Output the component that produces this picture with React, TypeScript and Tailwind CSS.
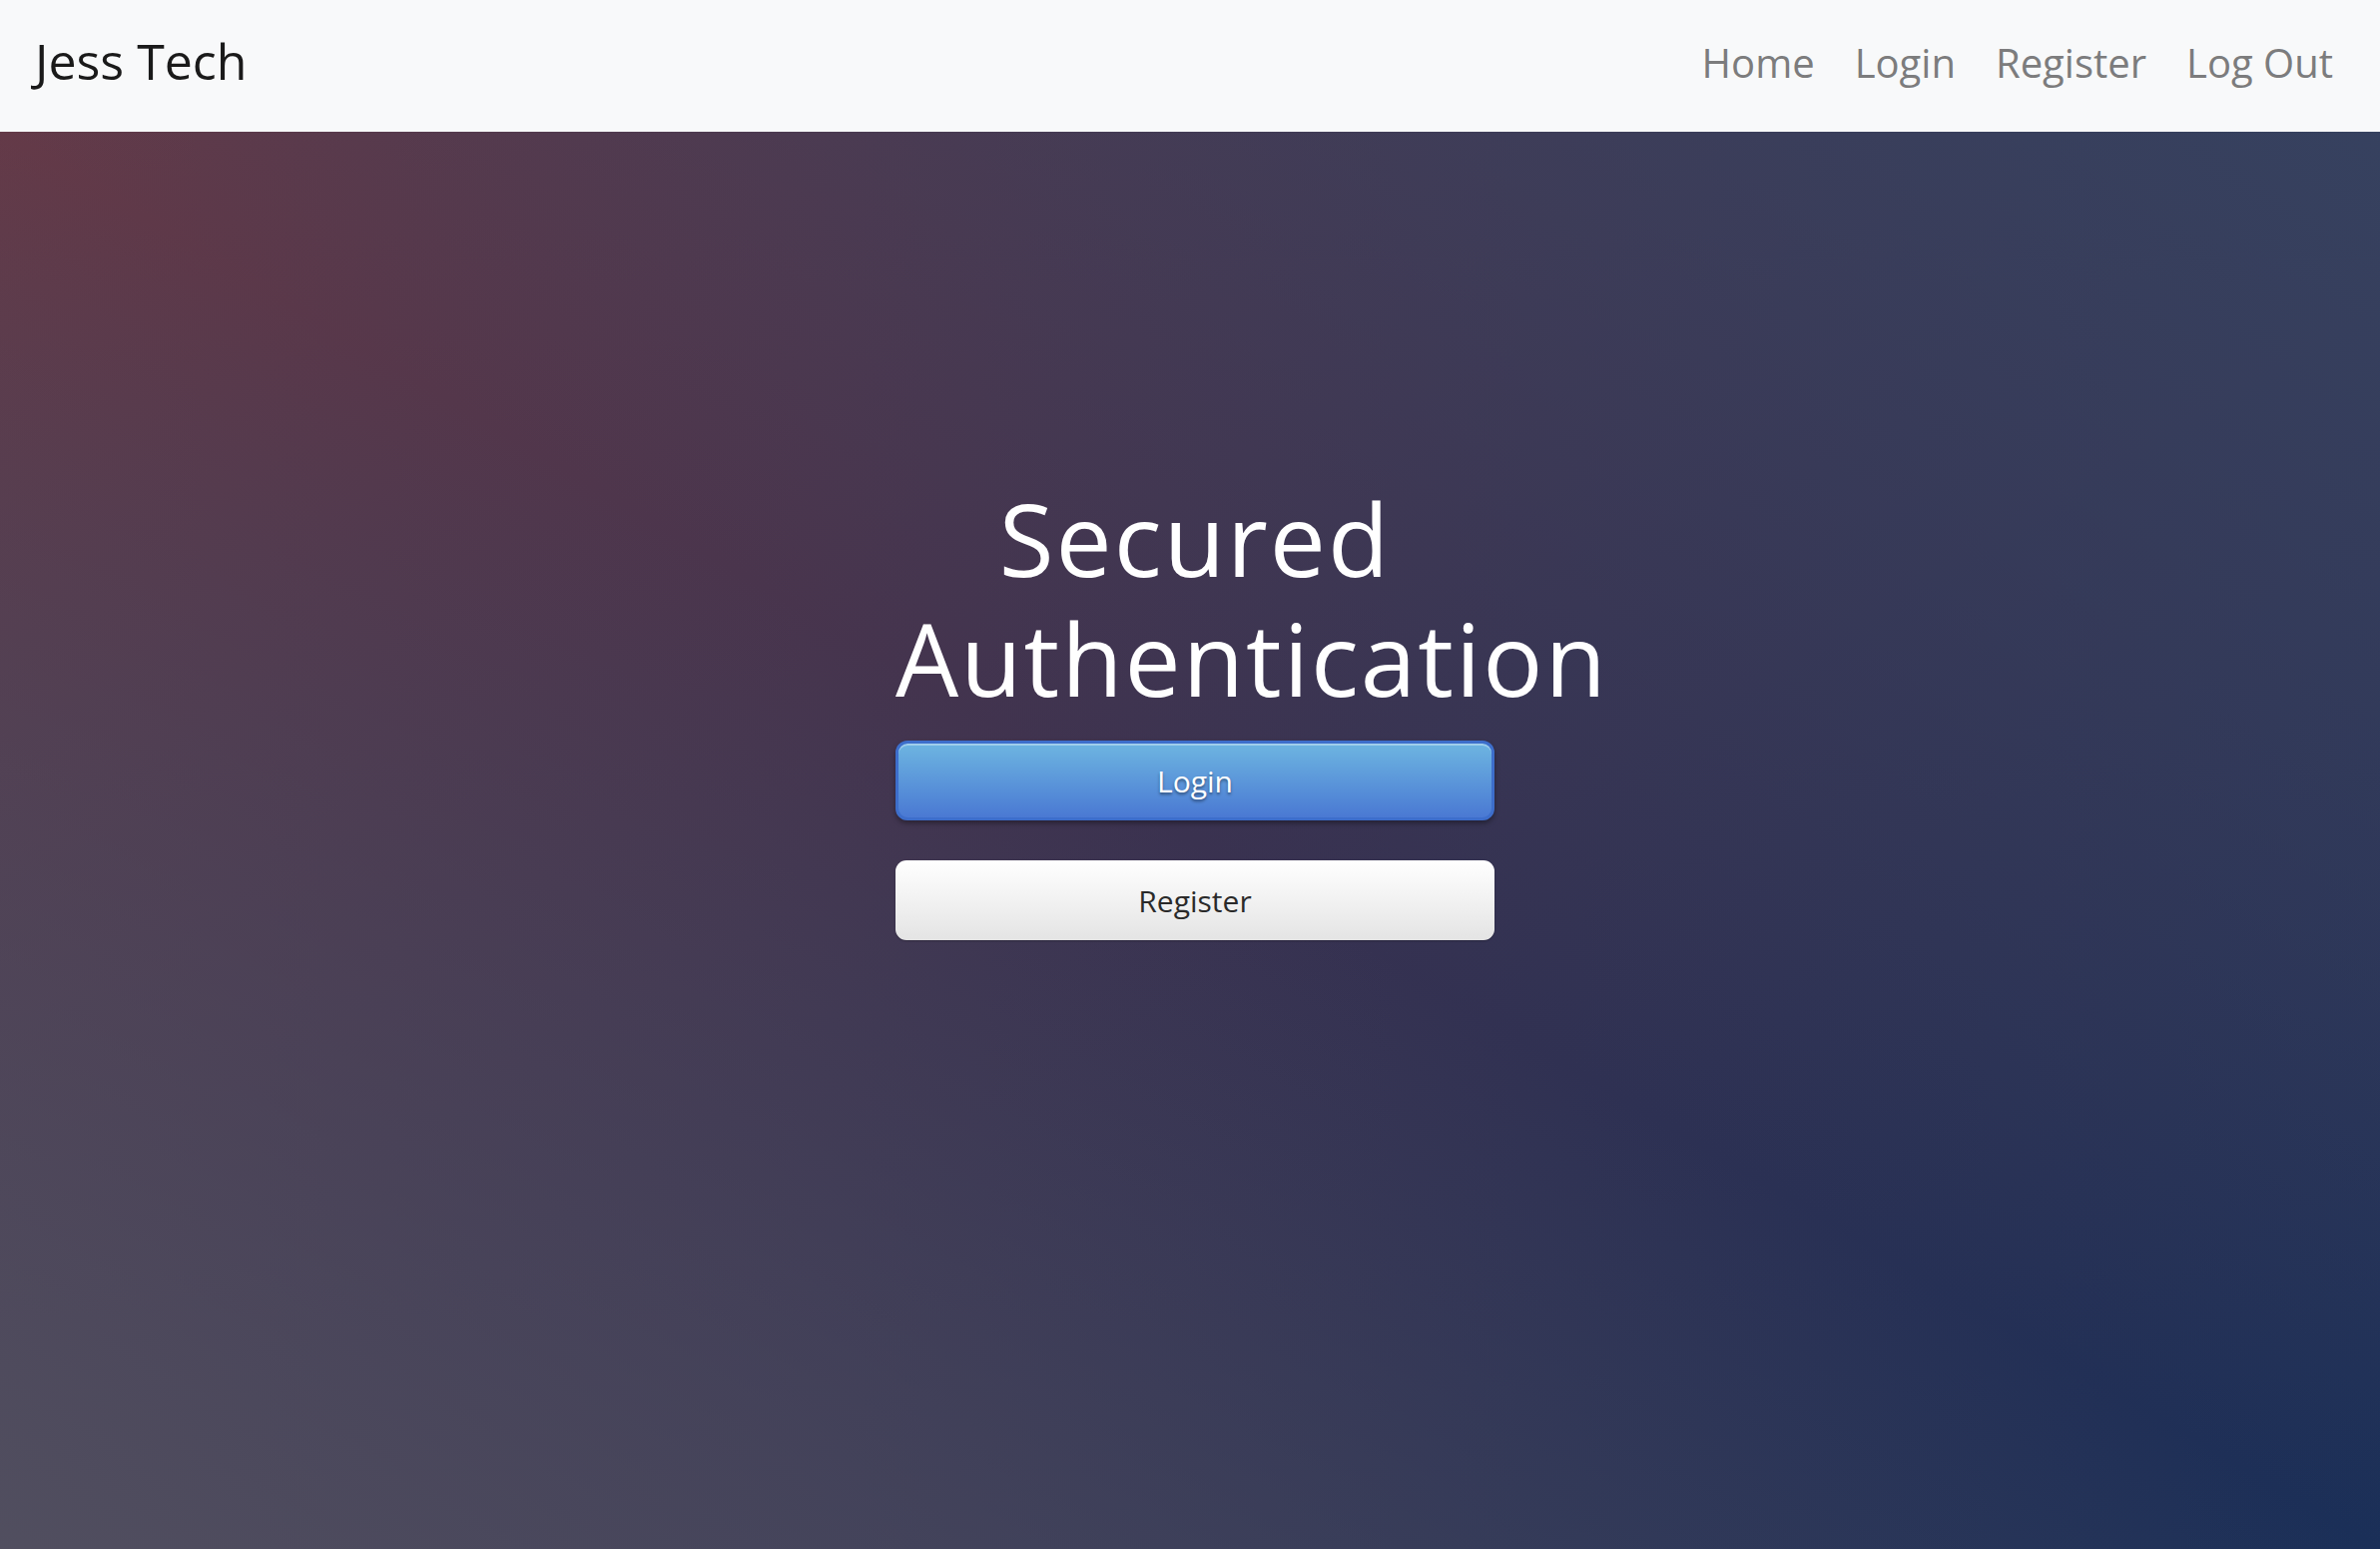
import React from "react";

export default function App() {
  return (
    <div className="min-h-screen w-full flex flex-col font-['Open_Sans',sans-serif]">
      <nav className="h-[132px] shrink-0 bg-[#f8f9fa] flex items-center justify-between pl-[35px] pr-[47px]">
        <a className="text-[50px] leading-[1.5] text-[#1a1a1a] pb-[9px]">Jess Tech</a>
        <div className="flex items-center gap-[40px] text-[40px] leading-[1.5] text-[#7c7c7d] pb-[7px] pl-[3px]">
          <a>Home</a>
          <a>Login</a>
          <a>Register</a>
          <a>Log Out</a>
        </div>
      </nav>
      <main className="flex-1 h-[1420px] bg-[linear-gradient(to_top_right,rgba(82,80,96,0.95)_0%,rgba(82,80,96,0)_50%,rgba(54,66,96,0)_50%,rgba(54,66,96,0.95)_100%),linear-gradient(to_bottom_right,#643a48_0%,#3a3250_50%,#1a2f58_100%)]">
        <div className="flex justify-center pl-[10px] pt-[347px]">
          <div className="w-[600px] flex flex-col">
            <h1 className="text-white text-center text-[100px] leading-[1.2] tracking-[2px] font-medium">
              Secured Authentication
            </h1>
            <button className="mt-[23px] h-[80px] w-full rounded-[12px] border-[3px] border-[#3d6ecb] bg-[linear-gradient(to_bottom,#6db5e1,#4a79d3)] text-white text-[30px] [text-shadow:0_2px_3px_rgba(0,0,0,0.45)] shadow-[inset_0_2px_0_rgba(255,255,255,0.35),0_3px_5px_rgba(0,0,0,0.35)]">
              Login
            </button>
            <button className="mt-[40px] h-[80px] w-full rounded-[11px] bg-[linear-gradient(to_bottom,#ffffff,#e4e4e4)] text-[#2a2a2a] text-[30px] shadow-[0_1px_2px_rgba(0,0,0,0.25)]">
              Register
            </button>
          </div>
        </div>
      </main>
    </div>
  );
}
